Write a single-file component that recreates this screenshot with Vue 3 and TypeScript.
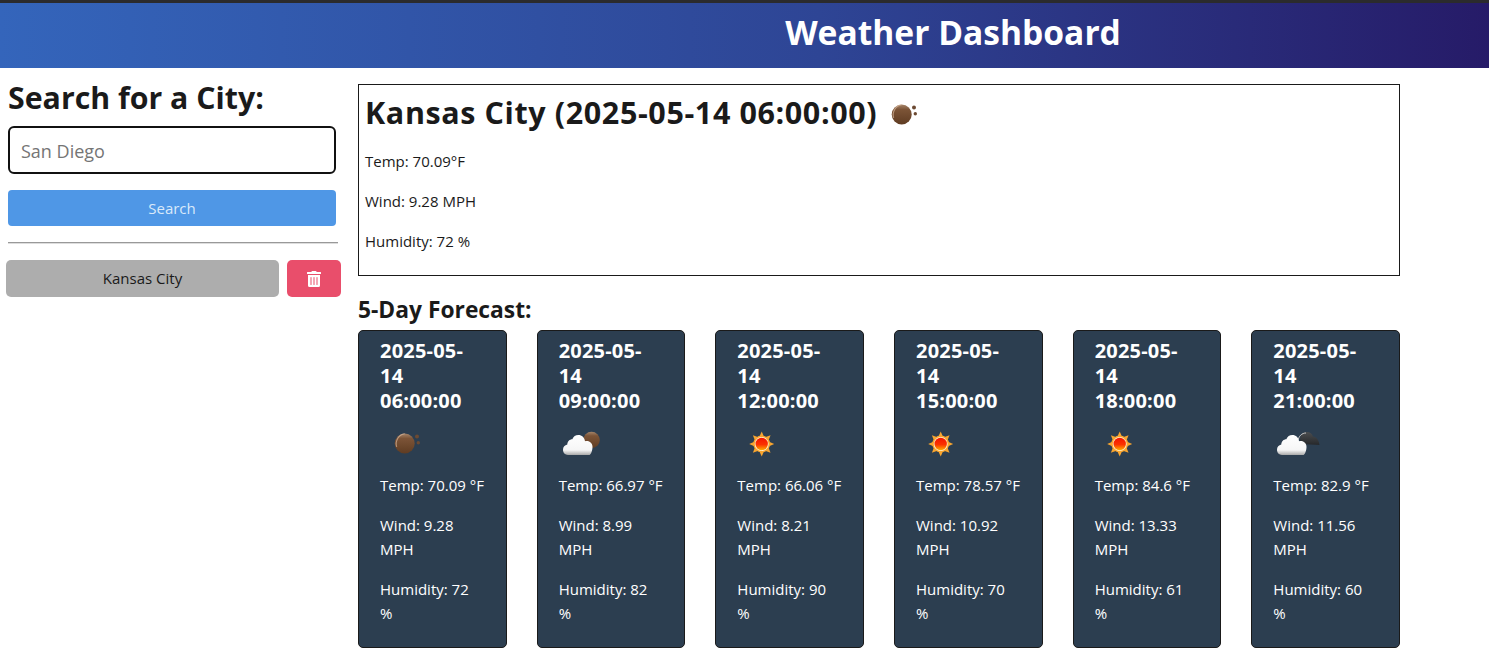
<script setup lang="ts">
type IconKind = 'moon' | 'cloudMoon' | 'sun' | 'cloudDark';

interface Slot {
  time: string;
  icon: IconKind;
  temp: string;
  wind: string;
  humidity: string;
}

const slots: Slot[] = [
  { time: '2025-05-14 06:00:00', icon: 'moon', temp: '70.09', wind: '9.28', humidity: '72' },
  { time: '2025-05-14 09:00:00', icon: 'cloudMoon', temp: '66.97', wind: '8.99', humidity: '82' },
  { time: '2025-05-14 12:00:00', icon: 'sun', temp: '66.06', wind: '8.21', humidity: '90' },
  { time: '2025-05-14 15:00:00', icon: 'sun', temp: '78.57', wind: '10.92', humidity: '70' },
  { time: '2025-05-14 18:00:00', icon: 'sun', temp: '84.6', wind: '13.33', humidity: '61' },
  { time: '2025-05-14 21:00:00', icon: 'cloudDark', temp: '82.9', wind: '11.56', humidity: '60' },
];

const rays = [0, 45, 90, 135, 180, 225, 270, 315];
const cloudPath =
  'M9 36c-3 0-5-2.400-5-5.200 0-2.700 1.800-4.700 4.300-5.200 0-3.200 2.400-5.400 5-5.400 1-2.600 3.300-4.200 6-4.200 3.600 0 6.400 2.700 6.700 6.300 .6-.2 1.200-.3 1.800-.3 3.200 0 5.700 2.500 5.700 5.700v.2c0 3.500-1.600 8.100-3.500 8.100z';
</script>

<template>
  <svg width="0" height="0" class="defs" aria-hidden="true">
    <defs>
      <linearGradient id="moon-fill" x1="0" y1="0" x2="0" y2="1">
        <stop offset="0" stop-color="#a5856a" />
        <stop offset="0.25" stop-color="#7c5437" />
        <stop offset="1" stop-color="#5f3c22" />
      </linearGradient>
      <linearGradient id="cloud-fill" x1="0" y1="0" x2="0" y2="1">
        <stop offset="0" stop-color="#ffffff" />
        <stop offset="0.75" stop-color="#f6f6f6" />
        <stop offset="1" stop-color="#a9a9a9" />
      </linearGradient>
      <linearGradient id="sun-fill" x1="0" y1="0" x2="0" y2="1">
        <stop offset="0" stop-color="#f21400" />
        <stop offset="0.55" stop-color="#fb3300" />
        <stop offset="1" stop-color="#ffb000" />
      </linearGradient>
      <linearGradient id="dark-fill" x1="0" y1="0" x2="0" y2="1">
        <stop offset="0" stop-color="#4b4d4f" />
        <stop offset="1" stop-color="#26282b" />
      </linearGradient>
      <symbol id="icon-moon" viewBox="0 0 50 50">
        <circle cx="24.700" cy="24.500" r="10" fill="url(#moon-fill)" />
        <path d="M16.700 27.800a10 10 0 0 1 8-13" fill="none" stroke="#d9b79c" stroke-width="1.100" opacity="0.7" />
        <circle cx="37" cy="17.500" r="2" fill="#6c4a32" />
        <circle cx="38.300" cy="23.800" r="1.700" fill="#6c4a32" />
      </symbol>
      <symbol id="icon-cloudMoon" viewBox="0 0 50 50">
        <circle cx="32.500" cy="21" r="8.300" fill="url(#moon-fill)" />
        <path :d="cloudPath" fill="url(#cloud-fill)" />
      </symbol>
      <symbol id="icon-sun" viewBox="0 0 50 50">
        <g fill="#f8a52f">
          <path v-for="r in rays" :key="r" :transform="`rotate(${r} 24.700 25)`" d="M21.700 19.300 24.700 12.500 27.700 19.300z" />
        </g>
        <circle cx="24.700" cy="25" r="8.400" fill="#f8a52f" />
        <circle cx="24.700" cy="25" r="7" fill="#fff0cf" />
        <circle cx="24.700" cy="25" r="6.200" fill="url(#sun-fill)" />
      </symbol>
      <symbol id="icon-cloudDark" viewBox="0 0 50 50">
        <path d="M28 25c-2-6 0-12 6-12 3 0 5 1.500 6 4.500 3 0 6 3.500 6.500 8.500z" fill="url(#dark-fill)" />
        <path d="M25 22c.5-5 4-8 8-8" fill="none" stroke="#c9c9c9" stroke-width="1" />
        <path :d="cloudPath" fill="url(#cloud-fill)" />
      </symbol>
    </defs>
  </svg>

  <header class="banner">
    <h1>Weather Dashboard</h1>
  </header>

  <div class="layout">
    <aside class="sidebar">
      <h2>Search for a City:</h2>
      <input class="city-input" type="text" placeholder="San Diego" />
      <button class="search-btn" type="button">Search</button>
      <hr />
      <div class="saved-row">
        <button class="saved-btn" type="button">Kansas City</button>
        <button class="delete-btn" type="button" aria-label="Delete">
          <svg viewBox="0 0 448 512" width="14" height="16">
            <path fill="#fff" d="M32 464a48 48 0 0 0 48 48h288a48 48 0 0 0 48-48V128H32zm272-256a16 16 0 0 1 32 0v224a16 16 0 0 1-32 0zm-96 0a16 16 0 0 1 32 0v224a16 16 0 0 1-32 0zm-96 0a16 16 0 0 1 32 0v224a16 16 0 0 1-32 0zM432 32H312l-9.400-18.700A24 24 0 0 0 281.100 0H166.800a23.720 23.720 0 0 0-21.400 13.300L136 32H16A16 16 0 0 0 0 48v32a16 16 0 0 0 16 16h416a16 16 0 0 0 16-16V48a16 16 0 0 0-16-16z" />
          </svg>
        </button>
      </div>
    </aside>

    <main class="content">
      <section class="current">
        <h2>
          Kansas City (2025-05-14 06:00:00)
          <svg class="current-icon" width="50" height="50"><use href="#icon-moon" /></svg>
        </h2>
        <p>Temp: 70.09°F</p>
        <p>Wind: 9.28 MPH</p>
        <p>Humidity: 72 %</p>
      </section>

      <h3 class="forecast-title">5-Day Forecast:</h3>
      <div class="forecast">
        <article v-for="slot in slots" :key="slot.time" class="card">
          <h4>{{ slot.time }}</h4>
          <svg class="card-icon" width="50" height="50"><use :href="`#icon-${slot.icon}`" /></svg>
          <p>Temp: {{ slot.temp }} °F</p>
          <p>Wind: {{ slot.wind }} MPH</p>
          <p>Humidity: {{ slot.humidity }} %</p>
        </article>
      </div>
    </main>
  </div>
</template>

<style>
html,
body {
  margin: 0;
  background: #fff;
}
</style>

<style scoped>
.defs {
  position: absolute;
}
.banner {
  box-sizing: border-box;
  height: 68px;
  padding: 0 0 5px 417px;
  border-top: 3px solid #2b2b2d;
  background: linear-gradient(90deg, #3465bb 0%, #2e4595 55%, #261b68 100%);
  display: flex;
  align-items: center;
  justify-content: center;
}
.banner h1 {
  margin: 0;
  color: #fff;
  font: 700 33.600px/1 'Open Sans', sans-serif;
}
.layout {
  display: flex;
  font-family: 'Open Sans', sans-serif;
  color: #1a1a1a;
}
.sidebar {
  box-sizing: border-box;
  width: 358px;
  padding: 0 20px 0 8px;
}
.sidebar h2 {
  margin: 11px 0 10px;
  font-size: 30.300px;
  line-height: 37px;
  font-weight: 700;
}
.city-input {
  display: block;
  box-sizing: border-box;
  width: 328px;
  height: 48px;
  padding: 2px 11px 0;
  border: 2px solid #111;
  border-radius: 6px;
  font: 18px 'Open Sans', sans-serif;
  outline: none;
}
.city-input::placeholder {
  color: #757575;
}
.search-btn {
  display: block;
  width: 328px;
  height: 36px;
  margin-top: 16px;
  border: 0;
  border-radius: 4px;
  background: #4f97e6;
  color: #d9e9fa;
  font: 15px 'Open Sans', sans-serif;
}
hr {
  margin: 16px 0 16px;
  border: 0;
  border-top: 1px solid #999;
  border-bottom: 1px solid #ddd;
}
.saved-row {
  display: flex;
  gap: 8px;
  margin-left: -2px;
  margin-right: -3px;
}
.saved-btn {
  flex: 1;
  height: 37px;
  padding: 0 0 2px;
  border: 0;
  border-radius: 5px;
  background: #adadad;
  color: #1a1a1a;
  font: 15px 'Open Sans', sans-serif;
}
.delete-btn {
  width: 54px;
  height: 37px;
  display: flex;
  align-items: center;
  justify-content: center;
  border: 0;
  border-radius: 5px;
  background: #e94e6b;
}
.content {
  width: 1042px;
  padding-top: 16px;
}
.current {
  box-sizing: border-box;
  height: 192px;
  padding: 0 6px;
  border: 1px solid #1a1a1a;
}
.current h2 {
  margin: 2px 0 12px;
  height: 50px;
  font-size: 30.500px;
  letter-spacing: 0.6px;
  line-height: 50px;
  font-weight: 700;
  white-space: nowrap;
}
.current-icon {
  vertical-align: top;
  margin: 3px 0 0 -9px;
}
.current p {
  margin: 0 0 16px;
  font-size: 15px;
  line-height: 24px;
}
.forecast-title {
  margin: 19px 0 5px;
  font-size: 22.800px;
  line-height: 30px;
  font-weight: 700;
}
.forecast {
  display: grid;
  grid-template-columns: repeat(6, 1fr);
  gap: 30px;
}
.card {
  box-sizing: border-box;
  height: 318px;
  padding: 7px 21px;
  border: 1px solid #1a1a1a;
  border-radius: 5px;
  background: #2c3e50;
  color: #fff;
}
.card h4 {
  margin: 0;
  font-size: 20px;
  letter-spacing: 0.2px;
  line-height: 25px;
  font-weight: 700;
}
.card-icon {
  display: block;
  margin: 6px 0 0;
}
.card p {
  margin: 4px 0 16px;
  font-size: 15px;
  line-height: 24px;
}
.card p + p {
  margin-top: 0;
}
</style>
